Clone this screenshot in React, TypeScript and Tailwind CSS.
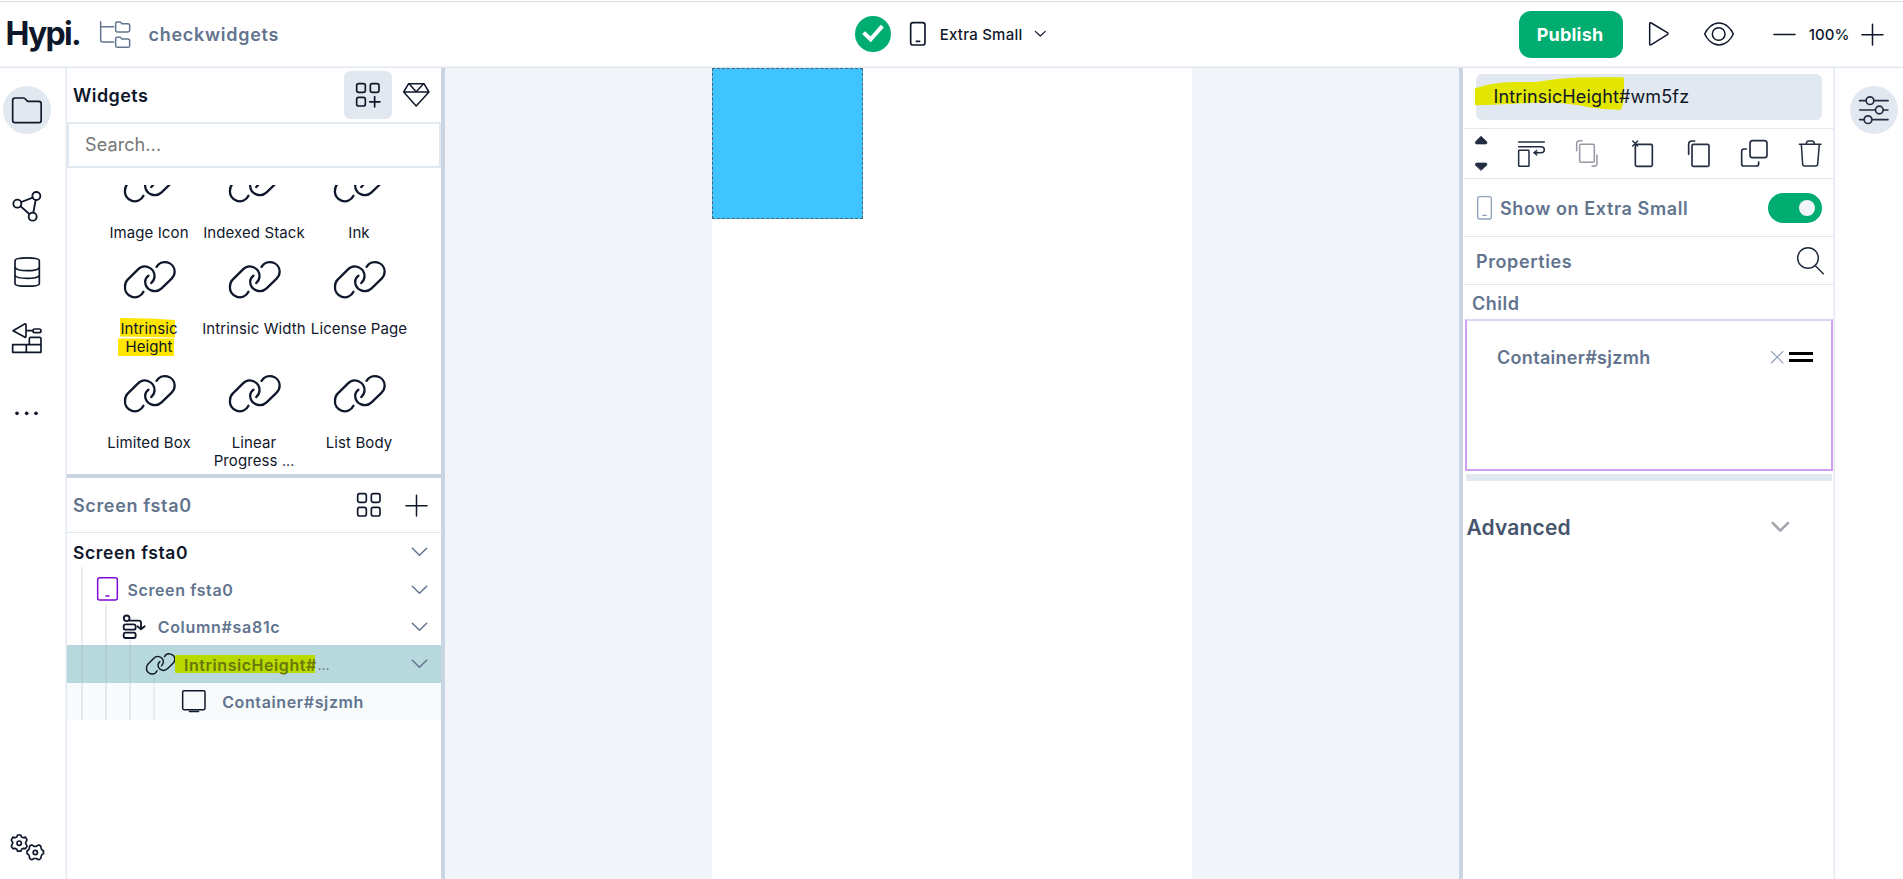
import React from "react";

type IconProps = {
  box: [number, number, number, number];
  sw?: number;
  className?: string;
  fill?: string;
  children: React.ReactNode;
};

/* Icons are drawn on a grid three times finer than the pixel grid. */
function Icon({ box, sw = 4.5, className = "", fill = "none", children }: IconProps) {
  return (
    <svg
      width={box[2] / 3}
      height={box[3] / 3}
      viewBox={box.join(" ")}
      fill={fill}
      stroke="currentColor"
      strokeWidth={sw}
      strokeLinecap="round"
      strokeLinejoin="round"
      className={"block shrink-0 overflow-visible " + className}
    >
      {children}
    </svg>
  );
}

const LinkIcon = ({ small = false }: { small?: boolean }) => (
  <svg
    width={small ? 29 : 51}
    height={small ? 21 : 36}
    viewBox="370 275 152 106"
    fill="none"
    stroke="currentColor"
    strokeWidth={small ? 7.5 : 6.8}
    strokeLinecap="round"
    strokeLinejoin="round"
    className="block shrink-0 overflow-visible"
  >
    <path d="M428 366A29 29 0 0 1 373 350Q373 338 381 330L411 300A29 29 0 0 1 461 320Q461 332 451 340" />
    <path d="M467 292A29 29 0 0 1 521 306Q521 318 512 327L482 356A29 29 0 0 1 433 336Q433 326 443 318" />
  </svg>
);

const Chevron = () => (
  <Icon box={[1236, 237, 45, 24]} sw={4.5}>
    <path d="M1237 238L1258.500 259L1280 238" />
  </Icon>
);

const Plus = () => (
  <Icon box={[1218, 74, 63, 63]}>
    <path d="M1249.500 75V137M1218 106H1281" />
  </Icon>
);

const Folder = () => (
  <Icon box={[37, 290, 89, 79]} sw={5}>
    <path d="M39 300Q39 293 46 293H70Q74 293 77 296L84 303H118Q124.500 303 124.500 310V360Q124.500 367 118 367H46Q39 367 39 360Z" />
  </Icon>
);

const GRID = [
  ["Image Icon", "Indexed Stack", "Ink"],
  ["Intrinsic Height", "Intrinsic Width", "License Page"],
  ["Limited Box", "Linear Progress ...", "List Body"],
];

function WidgetCell({ name }: { name: string }) {
  return (
    <div className="flex w-[105px] flex-col items-center pb-[19px]">
      <LinkIcon />
      <div className="mt-[23px] text-center text-[15px] leading-[18px] tracking-[0.1px]">
        {name === "Intrinsic Height" ? (
          <span className="relative z-0 block w-[60px]">
            <svg className="absolute -top-[2px] -left-px -z-10" width="60" height="39" viewBox="0 0 60 39">
              <path d="M2 0L34 0.500L57 2V19.500L2 18.500Z" fill="#ffe600" />
              <path d="M0 20.500H56V38H0Z" fill="#ffe600" />
            </svg>
            Intrinsic Height
          </span>
        ) : name.startsWith("Linear") ? (
          <span className="block">
            Linear
            <br />
            Progress <span className="text-[14px]">...</span>
          </span>
        ) : (
          <span className="whitespace-nowrap">{name}</span>
        )}
      </div>
    </div>
  );
}

function Header() {
  return (
    <header className="flex h-[68px] shrink-0 items-center border-b border-[#e2e8f0] pt-[1px] shadow-[inset_0_1px_0_#fff,inset_0_2px_0_#d9dddd,inset_0_-1px_0_#f1f5f9]">
      <div className="flex w-[855px] items-center">
        <div className="ml-[5.500px] w-[94px] text-[32px] leading-[40px] font-bold tracking-[-1.700px]">Hypi.</div>
        <Icon box={[300, 62, 90, 81]} className="text-slate-500">
          <path d="M302 64V119Q302 125 308 125H341M302 79H341" />
          <path d="M347 69Q347 65 351 65H361L366 70H384Q389 70 389 75V90Q389 95 384 95H352Q347 95 347 90Z" />
          <path d="M347 115Q347 111 351 111H361L366 116H384Q389 116 389 121V136Q389 141 384 141H352Q347 141 347 136Z" />
        </Icon>
        <div className="ml-[19px] text-[18px] font-semibold tracking-[0.720px] text-slate-500">checkwidgets</div>
      </div>
      <div className="flex w-[664px] items-center">
        <div className="flex size-[36px] items-center justify-center rounded-full bg-[#00ad70] text-white">
          <Icon box={[520, 82, 60, 47]} sw={12}>
            <path d="M526 106L543 122L574 87" strokeLinecap="square" strokeLinejoin="miter" />
          </Icon>
        </div>
        <Icon box={[661, 67, 47, 71]} sw={5} className="ml-[19px]">
          <rect x="663" y="69" width="43" height="67" rx="7" />
          <path d="M680 125H690" />
        </Icon>
        <div className="ml-[14px] w-[95.500px] pt-[2px] text-[15px] font-medium tracking-[0.250px]">Extra Small</div>
        <Icon box={[1036, 96, 32, 18]} sw={3.5}>
          <path d="M1037 97L1052 111L1067 97" />
        </Icon>
      </div>
      <button className="h-[47px] w-[104px] rounded-[12px] bg-[#00ad70] pr-[2px] text-[18px] font-bold tracking-[0.2px] text-white">
        Publish
      </button>
      <Icon box={[597, 67, 59, 71]} className="ml-[25.500px]">
        <path d="M599 73Q599 67 604 70L652 99Q656 102 652 105L604 135Q599 138 599 132Z" />
      </Icon>
      <Icon box={[761, 67, 90, 71]} className="ml-[35.500px]">
        <path d="M763 103C770 87 786 70 806 70S842 87 849 103C842 119 826 136 806 136S770 119 763 103Z" />
        <circle cx="805" cy="103" r="19" />
      </Icon>
      <Icon box={[972, 98, 63, 9]} className="ml-[40px]">
        <path d="M972 102.500H1035" />
      </Icon>
      <div className="ml-[14px] w-[53.500px] pt-[2px] text-[15px] font-medium tracking-[0.1px]">100%</div>
      <Plus />
    </header>
  );
}

function LeftRail() {
  return (
    <nav className="flex w-[67px] shrink-0 flex-col border-r border-[#e2e8f0] pl-[3px] shadow-[inset_-1px_0_0_#f1f5f9]">
      <div className="flex w-[48px] flex-1 flex-col items-center pt-[18px]">
        <div className="flex size-[48px] items-center justify-center rounded-full bg-slate-200">
          <Folder />
        </div>
        <Icon box={[37, 62, 84, 91]} sw={5.5} className="mt-[57px]">
          <circle cx="107" cy="77" r="12" />
          <circle cx="50" cy="100" r="12" />
          <circle cx="96" cy="139" r="12" />
          <path d="M62 95L96 82M60 108L86 131M105 89L98 127" />
        </Icon>
        <Icon box={[42, 261, 78, 90]} sw={5} className="mt-[36px]">
          <path d="M45 272C45 261 118 261 118 272V341C118 351 45 351 45 341Z" />
          <path d="M45 293Q50 302 81 302T118 293M45 317Q50 325 81 325T118 317" />
        </Icon>
        <Icon box={[37, 458, 89, 90]} sw={5} className="mt-[36px]">
          <path d="M40 481L75 461Q79 459 79 464V498Q79 503 75 500ZM79 481H100" />
          <rect x="100" y="476" width="24" height="11" rx="5" />
          <path d="M39 523H124V546H39ZM80 523V546M89 523V505Q89 501 93 501H120Q124 501 124 505V523" />
        </Icon>
        <Icon box={[47, 722, 70, 13]} sw={0} fill="currentColor" className="mt-[58px]">
          <circle cx="53" cy="729" r="5.500" />
          <circle cx="82" cy="729" r="5.500" />
          <circle cx="110" cy="729" r="5.500" />
        </Icon>
        <div className="mt-auto mb-[18px]">
          <Icon box={[32, 401, 99, 80]} sw={5}>
            <path d="M51.500 404H61.500L63.500 410L69.500 412.500L75 410L79.500 417V420L75.500 428L79.500 436V439L75 445L69.500 444L63.500 447L61.500 452.500H51.500L49.500 447L43.500 444L38 445L33.500 439V436L37.500 428L33.500 420V417L38 410L43.500 412.500L49.500 410Z" />
            <circle cx="56.500" cy="428.500" r="6.500" />
            <path d="M93 434L97 435L101 438H108L112 435L116 434L121 437L122.500 444L125 449L129.500 452V460L125 463L122.500 468L121 475L116 478L112 477L108 474.500H101L97 477L93 478L88 475L87 468L84.500 463L80 460V452L84.500 449L87 444L88 437Z" />
            <circle cx="105" cy="456.500" r="6.500" />
          </Icon>
        </div>
      </div>
    </nav>
  );
}

function TreeRow({ pad, icon, label, className = "", chevron = true }: { pad: string; icon?: React.ReactNode; label: React.ReactNode; className?: string; chevron?: boolean }) {
  return (
    <div className={"flex h-[37.400px] items-center pr-[14px] " + pad + " " + className}>
      {icon}
      <span className="pt-[2px]">{label}</span>
      {chevron && (
        <div className="ml-auto pt-px">
          <Chevron />
        </div>
      )}
    </div>
  );
}

function LeftPanel() {
  return (
    <section className="flex w-[374px] shrink-0 flex-col">
      <div className="flex h-[55px] shrink-0 items-center border-b border-[#e2e8f0] pl-[6px]">
        <h2 className="w-[271.300px] text-[18px] font-semibold tracking-[0.420px]">Widgets</h2>
        <div className="flex size-[48px] items-center justify-center rounded-[6px] bg-slate-200">
          <Icon box={[1070, 249, 72, 73]} sw={5}>
            <rect x="1072" y="251" width="26" height="26" rx="6" />
            <rect x="1113" y="251" width="26" height="26" rx="6" />
            <rect x="1072" y="292" width="26" height="26" rx="6" />
            <path d="M1126 290V321M1111 305.500H1142" />
          </Icon>
        </div>
        <Icon box={[1210, 249, 80, 71]} className="ml-[10.700px]">
          <path d="M1227 251H1273L1288 276L1249.500 318L1212 276ZM1212 276H1288" />
          <path d="M1229 252L1249.500 275L1271 252" />
        </Icon>
      </div>
      <input
        placeholder="Search..."
        className="h-[45px] w-full shrink-0 border-2 border-t border-[#e2e8f0] pb-[2px] pl-[16px] text-[18px] tracking-[0.1px] outline-none placeholder:text-[#757575]"
      />
      <div className="mt-[17px] h-[289px] shrink-0 overflow-hidden">
        <div className="-mt-[20.300px] flex flex-col pl-[29.500px]">
          {GRID.map((row) => (
            <div key={row[0]} className="flex">
              {row.map((n) => (
                <WidgetCell key={n} name={n} />
              ))}
            </div>
          ))}
        </div>
      </div>
      <div className="h-[4px] shrink-0 bg-slate-300" />
      <div className="flex h-[55px] shrink-0 items-center border-b border-[#e2e8f0] pl-[6px]">
        <h2 className="w-[283.500px] text-[18px] font-semibold tracking-[0.640px] text-slate-500">Screen fsta0</h2>
        <Icon box={[1070, 71, 70, 71]} sw={5}>
          <rect x="1072" y="73" width="26" height="26" rx="6" />
          <rect x="1113" y="73" width="26" height="26" rx="6" />
          <rect x="1072" y="114" width="26" height="26" rx="6" />
          <rect x="1113" y="114" width="26" height="26" rx="6" />
        </Icon>
        <div className="ml-[26px]">
          <Plus />
        </div>
      </div>
      <div className="relative text-[16px] font-semibold tracking-[0.600px] text-slate-500">
        <TreeRow pad="pl-[6px]" label={<span className="text-[17.500px] text-slate-900">Screen fsta0</span>} />
        <TreeRow
          pad="pl-[30px]"
          icon={
            <Icon box={[291, 321, 63, 71]} sw={4.500} className="mr-[9.500px] text-[#7e0bd6]">
              <rect x="293" y="323" width="59" height="67" rx="6" />
              <path d="M318 378H327" />
            </Icon>
          }
          label="Screen fsta0"
        />
        <TreeRow
          pad="pl-[55.500px]"
          icon={
            <Icon box={[368, 433, 68, 71]} sw={5.500} className="mr-[12.500px] text-slate-900">
              <circle cx="379" cy="443" r="8.500" />
              <rect x="370" y="461" width="36" height="16" rx="6" />
              <rect x="370" y="486" width="36" height="16" rx="6" />
              <path d="M388 450H415Q422 450 422 457V475M412 467L422 476L433 467" />
            </Icon>
          }
          label={<span className="tracking-[0.700px]">Column#sa81c</span>}
        />
        <TreeRow
          className="bg-[#b7d8dd]"
          pad="pl-[78.500px]"
          icon={
            <span className="text-slate-900">
              <LinkIcon small />
            </span>
          }
          label={
            <span className="-mt-[2px] flex items-center">
              <span className="h-[18px] w-[140.500px] bg-[#b8da00] pl-[9.500px] leading-[21px] tracking-[0.550px] text-[#68780a]">IntrinsicHeight#</span>
              <span className="ml-[2.500px] pt-px text-[14px] font-normal tracking-[0px]">...</span>
            </span>
          }
        />
        <TreeRow
          className="bg-[#f7fbfc]"
          pad="pl-[115px]"
          chevron={false}
          icon={
            <Icon box={[546, 660, 71, 67]} className="mr-[16.500px] text-slate-900">
              <rect x="548" y="662" width="67" height="57" rx="4" />
              <path d="M568 724.500H596" strokeWidth="4" />
            </Icon>
          }
          label={<span className="tracking-[0.620px]">Container#sjzmh</span>}
        />
        <span className="absolute top-[34px] bottom-0 left-[14px] w-[2px] bg-[#8fa9c0]/20" />
        <span className="absolute top-[70px] bottom-0 left-[38px] w-[2px] bg-[#8fa9c0]/20" />
        <span className="absolute top-[107px] bottom-0 left-[62px] w-[2px] bg-[#8fa9c0]/20" />
        <span className="absolute top-[145px] bottom-0 left-[86px] w-[2px] bg-[#8fa9c0]/15" />
      </div>
    </section>
  );
}

function Toolbar() {
  return (
    <div className="flex h-[50px] shrink-0 items-center border-b border-[#e2e8f0] pl-[11.300px] text-[#232c40]">
      <Icon box={[76, 408, 38, 104]} sw={2} fill="currentColor">
        <path d="M94.500 409L112 426Q113 432 108 432H81Q76 432 77 426ZM94.500 511L112 495Q113 489 108 489H81Q76 489 77 495Z" />
      </Icon>
      <Icon box={[203, 422, 81, 78]} className="ml-[29.700px]">
        <rect x="205" y="450" width="31" height="48" rx="2" />
        <path d="M205 425H282M205 439H272Q282 439 282 448T272 457H252" />
        <path d="M259 449L249 457L259 465Z" fill="currentColor" strokeWidth="2" />
      </Icon>
      <Icon box={[378, 420, 66, 81]} className="ml-[31.300px] text-[#9698a3]">
        <rect x="389" y="433" width="44" height="54" rx="4" />
        <path d="M380 452V431Q380 422 389 422H396M441 465V490Q441 499 432 499H426" />
      </Icon>
      <Icon box={[547, 420, 63, 81]} sw={5} className="ml-[34.300px]">
        <rect x="557" y="433" width="51" height="66" rx="4" />
        <path d="M549 423L564 438M564 423L549 438" strokeWidth="4" />
      </Icon>
      <Icon box={[714, 420, 65, 81]} sw={5} className="ml-[34.700px]">
        <rect x="726" y="433" width="51" height="66" rx="4" />
        <path d="M716 463V433Q716 423 726 423H734" />
      </Icon>
      <Icon box={[873, 420, 80, 81]} sw={5} className="ml-[31.300px]">
        <rect x="900" y="422" width="51" height="51" rx="8" />
        <path d="M889 447H882Q875 447 875 454V491Q875 498 882 498H919Q926 498 926 491V486" />
      </Icon>
      <Icon box={[1046, 420, 67, 81]} className="ml-[31px]">
        <path d="M1047 433H1112M1053 433L1057 493Q1057 498 1063 498H1096Q1102 498 1102 493L1107 433M1067 433Q1069 423 1074 423H1086Q1091 423 1093 433" />
      </Icon>
    </div>
  );
}

function RightPanel() {
  return (
    <section className="flex w-[372px] shrink-0 flex-col border-r border-[#e2e8f0] pl-px shadow-[inset_-1px_0_0_#f1f5f9]">
      <div className="flex h-[61px] shrink-0 border-b border-[#e2e8f0] pt-[6px] pl-[12px]">
        <div className="relative z-0 flex h-[46px] w-[346px] items-center rounded-[6px] bg-slate-200 pb-[1px] pl-[17.500px] text-[18px] tracking-[0.140px]">
          <svg className="absolute top-0 -left-px -z-10" width="152" height="40" viewBox="75 222 456 120">
            <path d="M75 265L110 255Q150 246 200 246T262 245Q330 235 370 233T518 232Q522 232 522 238V290Q518 328 510 329Q480 330 440 325C400 320 370 311 320 309S200 310 130 314L75 316Z" fill="#e3e600" />
          </svg>
          IntrinsicHeight#wm5fz
        </div>
      </div>
      <Toolbar />
      <div className="flex h-[58px] shrink-0 items-center border-b border-[#e2e8f0] pl-[13px]">
        <Icon box={[81, 229, 45, 71]} sw={4} className="text-slate-400">
          <rect x="83" y="231" width="41" height="67" rx="6" />
          <path d="M98 287H109" />
        </Icon>
        <span className="ml-[8px] w-[268px] pt-[2px] text-[18px] font-semibold tracking-[0.600px] text-slate-500">Show on Extra Small</span>
        <div className="flex h-[30px] w-[54px] items-center justify-end rounded-full bg-[#00ad70] pr-[7px]">
          <div className="size-[16px] rounded-full bg-slate-100" />
        </div>
      </div>
      <div className="flex h-[48px] shrink-0 items-center border-b border-[#e2e8f0] pl-[12px]">
        <span className="w-[320.700px] pt-[2px] text-[18px] font-semibold tracking-[0.600px] text-slate-500">Properties</span>
        <Icon box={[1040, 384, 80, 81]} className="text-[#232c40]">
          <circle cx="1073" cy="417" r="31" />
          <path d="M1095 440L1119 464" />
        </Icon>
      </div>
      <div className="flex h-[34px] shrink-0 items-center pt-[3px] pl-[8px] text-[18px] font-semibold tracking-[0.500px] text-slate-500">Child</div>
      <div className="mr-[1px] ml-[1px] h-[152px] shrink-0 border-2 border-[#cfa0f2] border-t-[#ddd6f3]">
        <div className="flex h-[72px] items-center pl-[30px]">
          <span className="w-[274px] text-[18px] font-semibold tracking-[0.3px] text-slate-500">Container#sjzmh</span>
          <Icon box={[962, 152, 37, 37]} sw={3.500} className="text-slate-400">
            <path d="M963 153L998 188M998 153L963 188" />
          </Icon>
          <div className="ml-[6px] h-[10px] w-[24px] border-y-3 border-black" />
        </div>
      </div>
      <div className="mx-[2px] mt-[3px] h-[7px] shrink-0 bg-slate-200" />
      <div className="flex h-[92px] shrink-0 items-center pl-[2.500px] text-slate-600">
        <span className="w-[305px] pt-[2px] text-[21px] font-semibold tracking-[0.150px]">Advanced</span>
        <Icon box={[965, 667, 50, 30]} sw={7.500} className="text-[#a3a6ad]">
          <path d="M967 670L990 693L1013 670" />
        </Icon>
      </div>
    </section>
  );
}

export default function App() {
  return (
    <div className="flex h-[879px] w-[1903px] flex-col overflow-hidden bg-white font-['Inter',sans-serif] text-slate-900">
      <Header />
      <div className="flex min-h-0 flex-1">
        <LeftRail />
        <LeftPanel />
        <div className="w-[4px] shrink-0 bg-slate-300" />
        <main className="flex flex-1 bg-slate-100">
          <div className="ml-[267px] w-[480px] bg-white">
            <div className="size-[151px] border border-dashed border-[#4a6375] bg-[#40c4ff]" />
          </div>
        </main>
        <div className="w-[4px] shrink-0 bg-slate-300" />
        <RightPanel />
        <aside className="flex w-[68px] shrink-0 justify-center pt-[18px]">
          <div className="mr-[-9px] flex size-[48px] items-center justify-center rounded-full bg-slate-200 text-[#232c40]">
            <Icon box={[1227, 287, 89, 85]} sw={5}>
              <path d="M1229 301H1248M1272 301H1314M1229 329H1276M1300 329H1314M1229 358H1242M1266 358H1314" />
              <circle cx="1260" cy="301" r="11.500" />
              <circle cx="1288" cy="329" r="11.500" />
              <circle cx="1254" cy="358" r="11.500" />
            </Icon>
          </div>
        </aside>
      </div>
    </div>
  );
}
